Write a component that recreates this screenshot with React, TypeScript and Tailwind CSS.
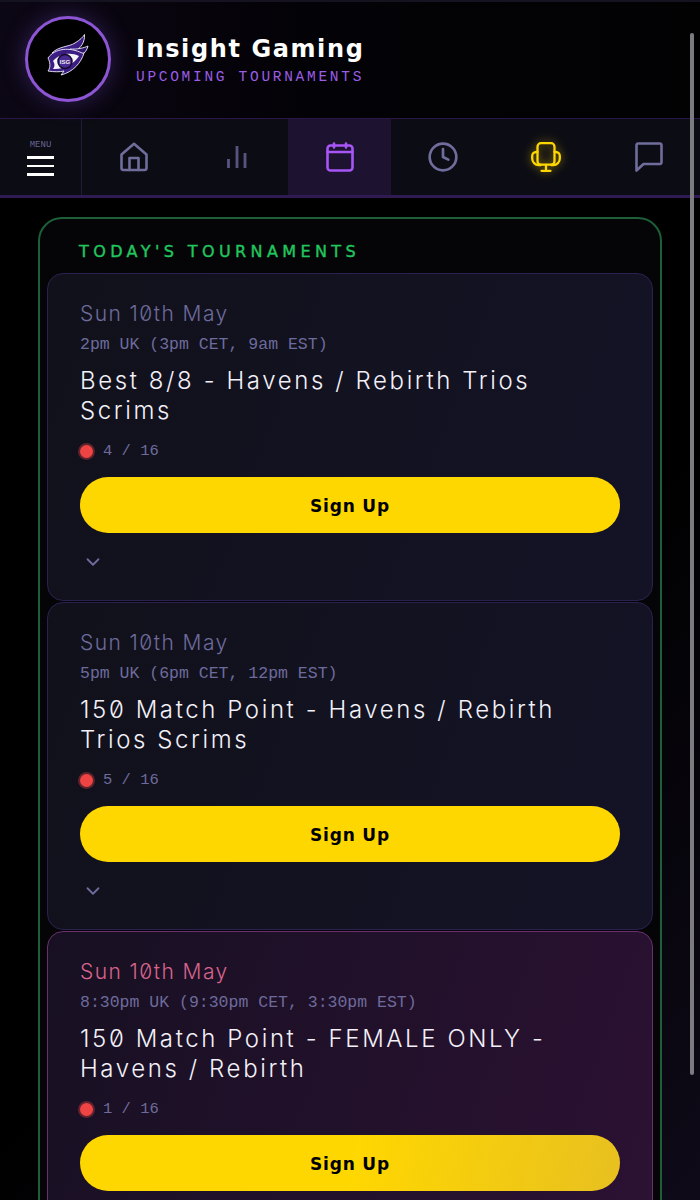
import { ChevronDown, Clock } from 'lucide-react'

const mono = 'font-["Liberation_Mono",monospace]'

function HomeIcon() {
  return (
    <svg viewBox="0 0 28 30" className="h-[30px] w-[28px]" fill="none" stroke="#6f6d9c" strokeWidth="2.6" strokeLinejoin="round" strokeLinecap="round">
      <path d="M1.5 12.5 14 1.8l12.5 10.7V26a2 2 0 0 1-2 2H3.5a2 2 0 0 1-2-2z" />
      <path d="M9.5 28V16h9v12" />
    </svg>
  )
}

function BarsIcon() {
  return (
    <svg viewBox="0 0 22 24" className="h-[24px] w-[22px]" fill="none" stroke="#575580" strokeWidth="2.8">
      <path d="M2.5 23v-9M11 23V1M19 23V8" />
    </svg>
  )
}

function CalendarIcon() {
  return (
    <svg viewBox="0 0 28 30" className="h-[30px] w-[28px]" fill="none" stroke="#a855f7" strokeWidth="2.6" strokeLinecap="round">
      <rect x="1.5" y="3.5" width="25" height="25" rx="3" />
      <path d="M1.5 10h25M8 1.5v4M20 1.5v4" />
    </svg>
  )
}

function ChairIcon() {
  return (
    <svg viewBox="0 0 30 30" className="h-[30px] w-[30px] drop-shadow-[0_0_5px_rgba(255,215,0,0.6)]" fill="none" stroke="#ffd700" strokeWidth="2.3" strokeLinejoin="round" strokeLinecap="round">
      <rect x="6.5" y="1.2" width="17" height="21.5" rx="3.5" />
      <path d="M6.5 10H5.2a4 4 0 0 0-4 4v2.5a6.5 6.5 0 0 0 6.5 6.5h2" />
      <path d="M23.5 10h1.3a4 4 0 0 1 4 4v2.5a6.5 6.5 0 0 1-6.5 6.5h-2" />
      <path d="M15 23v5M10.5 28.8h9" />
    </svg>
  )
}

function ChatIcon() {
  return (
    <svg viewBox="0 0 28 30" className="h-[30px] w-[28px]" fill="none" stroke="#6f6d9c" strokeWidth="2.6" strokeLinejoin="round">
      <path d="M3 1.5h22A1.5 1.5 0 0 1 26.5 3v17.5A1.5 1.5 0 0 1 25 22H8.5l-7 6.5V3A1.5 1.5 0 0 1 3 1.5z" />
    </svg>
  )
}

function Logo() {
  return (
    <svg viewBox="0 0 44 46" className="mb-[3px] h-[46px] w-[44px]">
      {/* wing feathers */}
      <path d="M6 19 C13 12 23 13 29 9 C34 6 37 3 38.5 0.5 C39 8 35 14 29 17 C23 19 14 18 6 19z" fill="#3b1d84" stroke="#f1eef8" strokeWidth="0.9" />
      <path d="M24 15 C31 15.5 38 14 42 12 C40.5 18 36 22 31 23 z" fill="#2d1570" stroke="#f1eef8" strokeWidth="0.9" />
      {/* eye */}
      <path d="M2 24 C9 14 24 13 36 19 C36.5 19.3 37.5 19 38 19 C35 29 27 38 15 41 L18 37 C14 38 8 38 2 37 C5 33 4 28 2 24z" fill="#3b1d84" stroke="#f1eef8" strokeWidth="0.9" />
      <path d="M7 27 C14 19 25 18 33 22 C28 30 17 36 7 35 C9 32 9 30 7 27z" fill="#f4f2fa" />
      <circle cx="19" cy="27.5" r="7" fill="#4a2a94" stroke="#140a28" strokeWidth="1.5" />
      <text x="19" y="29.8" textAnchor="middle" fontSize="6" fontWeight="700" fill="#eee" fontFamily="Liberation Sans, sans-serif">ISG</text>
    </svg>
  )
}

type Tournament = { time: string; title: string; count: string; female?: boolean }

const tournaments: Tournament[] = [
  { time: '2pm UK (3pm CET, 9am EST)', title: 'Best 8/8 - Havens / Rebirth Trios Scrims', count: '4 / 16' },
  { time: '5pm UK (6pm CET, 12pm EST)', title: '150 Match Point - Havens / Rebirth Trios Scrims', count: '5 / 16' },
  { time: '8:30pm UK (9:30pm CET, 3:30pm EST)', title: '150 Match Point - FEMALE ONLY - Havens / Rebirth', count: '1 / 16', female: true },
]

function TournamentCard({ t }: { t: Tournament }) {
  return (
    <div
      className={
        t.female
          ? 'rounded-2xl border border-[#6b2f6e] bg-[linear-gradient(110deg,#171022,#2c1133)] px-8 pt-[27px] pb-[29px]'
          : 'rounded-2xl border border-[#2a2150] bg-[linear-gradient(110deg,#11111b,#141326)] px-8 pt-[27px] pb-[29px]'
      }
    >
      <p className={`font-["Inter",sans-serif] text-[21px] leading-[26px] font-light tracking-[1.4px] slashed-zero ${t.female ? 'text-[#d8648c]' : 'text-[#6d6b9c]'}`}>
        Sun 10th May
      </p>
      <p className={`${mono} mt-[8px] text-[16.5px] leading-[20px] text-[#6d6b9c]`}>{t.time}</p>
      <h3 className='mt-[11px] font-["Inter",sans-serif] text-[24px] leading-[30px] font-light tracking-[2.6px] text-[#f2f0f8] slashed-zero'>
        {t.title}
      </h3>
      <div className="mt-[15px] flex items-center gap-[10px]">
        <span className="h-[13px] w-[13px] rounded-full bg-[#ef4444] shadow-[0_0_0_2px_rgba(239,68,68,0.35)]" />
        <span className={`${mono} text-[15.5px] leading-[20px] text-[#6d6b9c]`}>{t.count}</span>
      </div>
      <button className={`mt-[16px] h-[56px] w-full rounded-full pt-[3px] font-["DejaVu_Sans",sans-serif] text-[17px] font-bold tracking-[0.8px] text-black ${t.female ? 'bg-[linear-gradient(100deg,#ffd700_50%,#e8c020)]' : 'bg-[#ffd700]'}`}>
        Sign Up
      </button>
      <div className="mt-[18px] h-[20px]">
        <ChevronDown className="ml-[2px] h-[22px] w-[22px] text-[#6d6b9c]" strokeWidth={2} />
      </div>
    </div>
  )
}

export default function App() {
  return (
    <div className="relative h-[1200px] w-[700px] overflow-hidden bg-[linear-gradient(135deg,#000_60%,#0e0a18)]">
      {/* Header */}
      <header className="flex h-[119px] items-center gap-[24px] border-t-2 border-b border-t-[#15131f] border-b-[#2a1747] bg-[linear-gradient(90deg,#0c0714,#030206_45%,#020203)] pb-[3px] pl-[25px]">
        <div className="flex h-[86px] w-[86px] items-center justify-center rounded-full border-[3px] border-[#8d55d4] bg-black shadow-[0_0_24px_rgba(139,92,246,0.3)]">
          <Logo />
        </div>
        <div className="pl-[1px]">
          <h1 className='font-["DejaVu_Sans",sans-serif] text-[24px] leading-[32px] font-bold tracking-[1.6px] text-white'>Insight Gaming</h1>
          <p className={`${mono} mt-[4px] text-[14.5px] leading-[16px] tracking-[2.7px] text-[#9b5de5]`}>UPCOMING TOURNAMENTS</p>
        </div>
      </header>

      {/* Nav */}
      <nav className="flex h-[79px] border-b-[3px] border-b-[#2f1a52] bg-[#0c0c14]">
        <div className="flex w-[82px] flex-col items-center justify-center gap-[6px] border-r border-r-[#241a3c] pt-[2px]">
          <span className={`${mono} text-[9px] leading-[10px] text-[#66648f]`}>MENU</span>
          <div className="flex w-[27px] flex-col gap-[6px]">
            <div className="h-[2.5px] bg-white" />
            <div className="h-[2.5px] bg-white" />
            <div className="h-[2.5px] bg-white" />
          </div>
        </div>
        <div className="flex w-[103px] items-center justify-center"><HomeIcon /></div>
        <div className="flex w-[103px] items-center justify-center"><BarsIcon /></div>
        <div className="flex w-[103px] items-center justify-center bg-[#1d1330]"><CalendarIcon /></div>
        <div className="flex w-[103px] items-center justify-center"><Clock className="h-[32px] w-[32px] text-[#6f6d9c]" strokeWidth={2} /></div>
        <div className="flex w-[103px] items-center justify-center"><ChairIcon /></div>
        <div className="flex w-[103px] items-center justify-center"><ChatIcon /></div>
      </nav>

      {/* Main */}
      <main className="px-[38px] pt-[19px]">
        <section className="rounded-[24px] border-2 border-[#1d5f38] bg-[#050507] px-[7px] pb-[40px]">
          <h2 className='pt-[23px] pl-[32px] font-["DejaVu_Sans",sans-serif] text-[16px] leading-[20px] tracking-[4.4px] text-[#22c55e] uppercase [-webkit-text-stroke:0.4px_#22c55e]'>
            Today's Tournaments
          </h2>
          <div className="mt-[11px] flex flex-col gap-[1px]">
            {tournaments.map((t) => (
              <TournamentCard key={t.time} t={t} />
            ))}
          </div>
        </section>
      </main>

      {/* Scrollbar */}
      <div className="absolute top-[33px] left-[690px] h-[1042px] w-[4px] rounded-full bg-[#7c7c80]" />
    </div>
  )
}
